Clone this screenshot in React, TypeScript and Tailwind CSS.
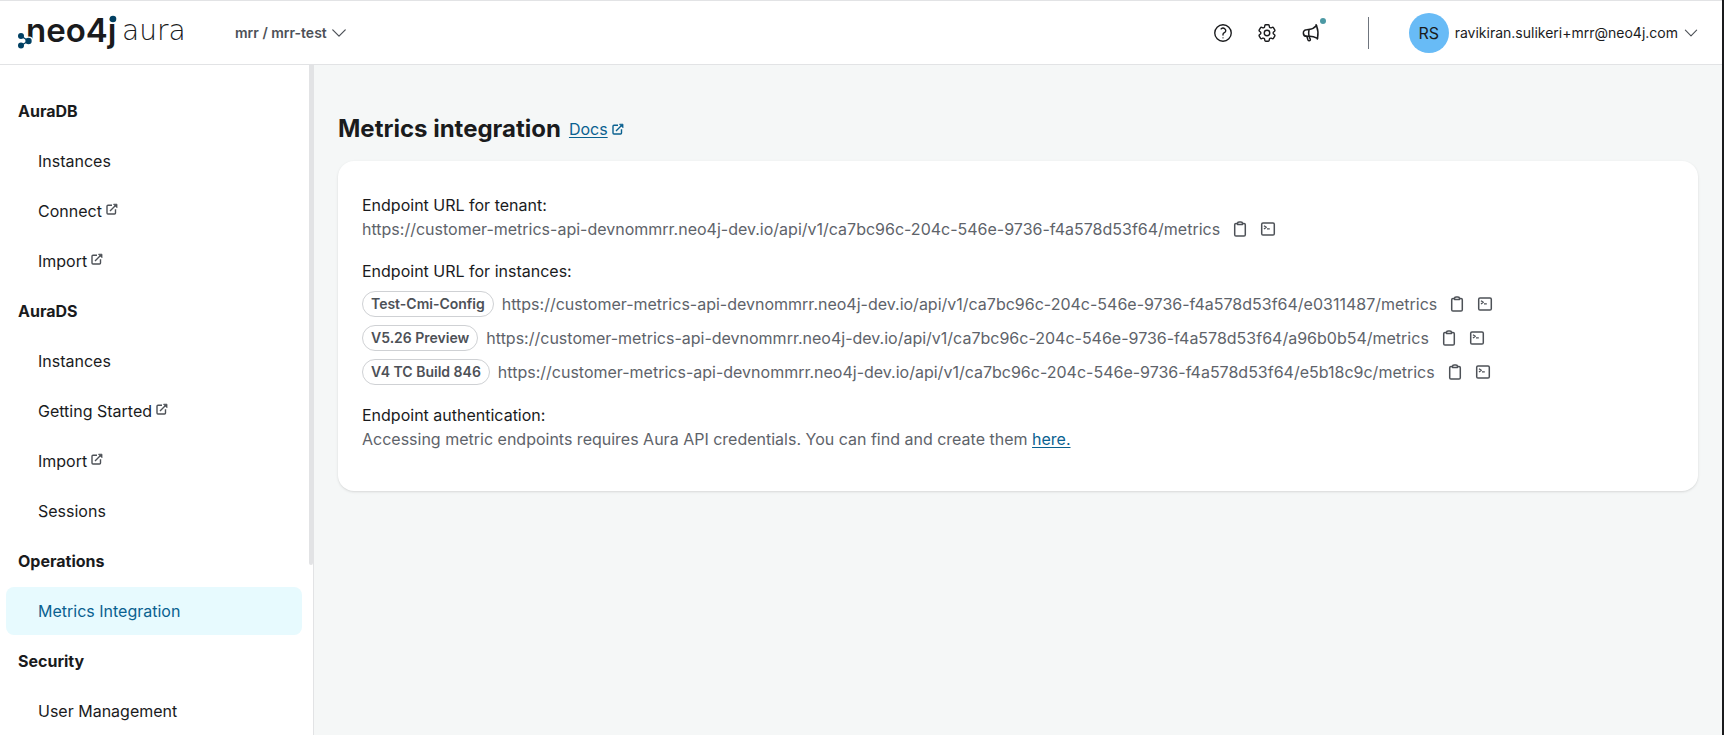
import React from "react";
import { HiOutlineCog6Tooth, HiOutlineQuestionMarkCircle, HiOutlineChevronDown } from "react-icons/hi2";

const BASE = "https://customer-metrics-api-devnommrr.neo4j-dev.io/api/v1/ca7bc96c-204c-546e-9736-f4a578d53f64";

type NavEntry = { label: string; external?: boolean; active?: boolean };

const nav: { title: string; items: NavEntry[] }[] = [
  {
    title: "AuraDB",
    items: [{ label: "Instances" }, { label: "Connect", external: true }, { label: "Import", external: true }],
  },
  {
    title: "AuraDS",
    items: [
      { label: "Instances" },
      { label: "Getting Started", external: true },
      { label: "Import", external: true },
      { label: "Sessions" },
    ],
  },
  { title: "Operations", items: [{ label: "Metrics Integration", active: true }] },
  { title: "Security", items: [{ label: "User Management" }] },
];

const instances = [
  { name: "Test-Cmi-Config", id: "e0311487" },
  { name: "V5.26 Preview", id: "a96b0b54" },
  { name: "V4 TC Build 846", id: "e5b18c9c" },
];

function Logo() {
  return (
    <svg width="175" height="48" viewBox="0 0 175 48" role="img" aria-label="neo4j aura">
      <text x="10" y="33" fill="#1a1b1d" fontFamily="Inter, sans-serif" fontSize="33" fontWeight="600">neo4j</text>
      <text x="106" y="31" fill="#1a1b1d" fontFamily="'DejaVu Sans', sans-serif" fontSize="28" fontWeight="200">aura</text>
      <circle cx="13" cy="32" r="4.600" fill="#fff" />
      <g fill="#014063">
        <path d="M5 27L12.500 32L5 36.500" fill="none" stroke="#014063" strokeWidth="1.300" />
        <circle cx="5" cy="27" r="3" />
        <circle cx="12.500" cy="32" r="3.200" />
        <circle cx="5" cy="36.500" r="3" />
        <circle cx="97" cy="10" r="3.300" />
      </g>
    </svg>
  );
}

function ExternalIcon({ className }: { className: string }) {
  return (
    <svg className={className} viewBox="0 0 12 12" fill="none" stroke="currentColor" strokeWidth="1.400" strokeLinejoin="round" aria-hidden="true">
      <path d="M6 2.200H2C1.400 2.200 1 2.600 1 3.200V10C1 10.600 1.400 11 2 11H8.500C9.100 11 9.500 10.600 9.500 10V6.200M4 8L9.500 2.500" />
      <path d="M7.500 1.200H11V4.700Z" fill="currentColor" strokeWidth="0.800" />
    </svg>
  );
}

function ClipboardIcon() {
  return (
    <svg className="size-4" viewBox="0 0 16 16" fill="none" stroke="currentColor" strokeWidth="1.500" strokeLinejoin="round" aria-hidden="true">
      <path d="M5.500 2.500H4C3.200 2.500 2.700 3 2.700 3.800V13.700C2.700 14.500 3.200 15 4 15H12C12.800 15 13.300 14.500 13.300 13.700V3.800C13.300 3 12.800 2.500 12 2.500H10.500" />
      <path d="M5.500 3.500V2.600C5.500 1.700 6.200 1 7.100 1H8.900C9.800 1 10.500 1.700 10.500 2.600V3.500Z" />
    </svg>
  );
}

function TerminalIcon() {
  return (
    <svg className="size-4" viewBox="0 0 16 16" fill="none" stroke="currentColor" strokeWidth="1.500" strokeLinejoin="round" aria-hidden="true">
      <rect x="1.700" y="2" width="12.600" height="12" rx="1.300" />
      <path d="M4 4.700L6.300 6.300L4 8M7 7.800H9.800" strokeWidth="1.300" />
    </svg>
  );
}

function MegaphoneIcon() {
  return (
    <svg className="size-[22px]" viewBox="0 0 22 22" fill="none" stroke="currentColor" strokeWidth="1.500" strokeLinecap="round" strokeLinejoin="round" aria-hidden="true">
      <path d="M9 7.500L6.500 7.700A3.300 3.300 0 0 0 6.800 14.300L9 14.200C12 14 14.500 14.800 17.500 16.300C18.300 12.500 18 7.500 16.500 3.500C14.500 5.800 12 7.200 9 7.500Z" />
      <path d="M9 7.500C8.600 9.500 8.600 12 9 14.200L10.300 17.300C10.600 18.200 10 18.800 9.200 18.800C8.500 18.800 8.200 18.500 8 18L6.800 14.300" />
      <path d="M16.500 3.500L16 2.800M17.500 16.300L17.300 17" />
    </svg>
  );
}

function UrlRow({ url, label }: { url: string; label: string }) {
  return (
    <>
      <span className="text-[#5e636a]">{url}</span>
      <button type="button" aria-label={`Copy ${label} URL`} className="ml-3 text-[#4d5157]">
        <ClipboardIcon />
      </button>
      <button type="button" aria-label={`Copy ${label} command`} className="ml-3 text-[#4d5157]">
        <TerminalIcon />
      </button>
    </>
  );
}

export default function App() {
  return (
    <div className="flex h-screen flex-col overflow-hidden border-r-2 border-[#1a1b1d] bg-[#f5f7f7] font-['Inter',sans-serif] text-base text-[#1a1b1d]">
      <header className="flex h-[65px] shrink-0 items-center border-y border-[#e2e3e5] bg-white pr-[22px] pl-4">
        <Logo />
        <button type="button" className="ml-11 flex items-center gap-0.5 text-sm font-semibold text-[#4d5157]">
          mrr / mrr-test
          <HiOutlineChevronDown className="size-5" />
        </button>
        <div className="ml-auto flex items-center">
          <div className="flex items-center gap-[22px]">
            <button type="button" aria-label="Help"><HiOutlineQuestionMarkCircle className="size-[22px]" /></button>
            <button type="button" aria-label="Settings"><HiOutlineCog6Tooth className="size-[22px]" /></button>
            <button type="button" aria-label="Announcements" className="relative">
              <MegaphoneIcon />
              <span className="absolute -top-1 -right-1 size-1.5 rounded-full bg-[#4c99a4]" />
            </button>
          </div>
          <div className="ml-[46px] h-8 w-px bg-[#6f757e]" />
          <button type="button" className="ml-10 flex items-center">
            <span className="flex size-10 items-center justify-center rounded-full bg-[#68bbf6]">RS</span>
            <span className="ml-1.5 text-sm">ravikiran.sulikeri+mrr@neo4j.com</span>
            <HiOutlineChevronDown className="ml-1 size-[18px] text-[#4d5157]" />
          </button>
        </div>
      </header>
      <div className="flex min-h-0 flex-1">
        <aside className="flex w-[314px] shrink-0 overflow-hidden border-r border-[#e2e3e5] bg-white">
          <nav className="flex flex-1 flex-col gap-0.5 pt-[22px] pr-[7px] pl-1.5">
            {nav.map((section) => (
              <React.Fragment key={section.title}>
                <h2 className="flex h-12 shrink-0 items-center pl-3 font-bold">{section.title}</h2>
                {section.items.map((item) => (
                  <a
                    key={item.label}
                    href="#"
                    className={
                      item.active
                        ? "flex h-12 shrink-0 items-center rounded-lg bg-[#e7fafe] pl-8 text-[#0a6190]"
                        : "flex h-12 shrink-0 items-center rounded-lg pl-8"
                    }
                  >
                    {item.label}
                    {item.external && <ExternalIcon className="mb-1 ml-1 size-3 text-[#4d5157]" />}
                  </a>
                ))}
              </React.Fragment>
            ))}
          </nav>
          <div className="h-[500px] w-1 rounded-b-sm bg-[#e2e3e5]" />
        </aside>
        <main className="min-w-0 flex-1 px-6 pt-12">
          <div className="flex h-8 items-center">
            <h1 className="text-2xl font-bold">Metrics integration</h1>
            <a href="#" className="ml-2 flex items-center gap-1 text-[#0a6190]">
              <span className="underline underline-offset-2">Docs</span>
              <ExternalIcon className="size-3" />
            </a>
          </div>
          <section className="mt-4 rounded-2xl bg-white px-6 pt-8 pb-10 shadow-sm">
            <h2>Endpoint URL for tenant:</h2>
            <div className="flex h-6 items-center">
              <UrlRow url={`${BASE}/metrics`} label="tenant" />
            </div>
            <h2 className="mt-[18px]">Endpoint URL for instances:</h2>
            <ul className="mt-2 flex flex-col gap-2">
              {instances.map((instance) => (
                <li key={instance.id} className="flex items-center">
                  <span className="mr-2 rounded-full border border-[#cfd1d4] px-2 text-sm leading-6 font-semibold text-[#4d5157]">
                    {instance.name}
                  </span>
                  <UrlRow url={`${BASE}/${instance.id}/metrics`} label={instance.name} />
                </li>
              ))}
            </ul>
            <h2 className="mt-[18px]">Endpoint authentication:</h2>
            <p className="text-[#5e636a]">
              Accessing metric endpoints requires Aura API credentials. You can find and create them{" "}
              <a href="#" className="text-[#0a6190] underline underline-offset-2">here.</a>
            </p>
          </section>
        </main>
      </div>
    </div>
  );
}
